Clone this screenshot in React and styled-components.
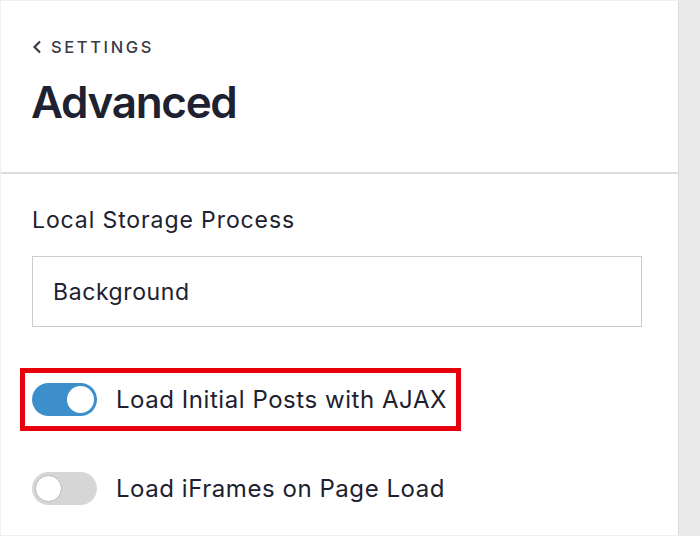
import React from 'react';
import styled, { createGlobalStyle } from 'styled-components';

const GlobalStyle = createGlobalStyle`
  html, body {
    margin: 0;
    padding: 0;
    background: #e9e9e9;
    font-family: Inter, "Noto Sans", sans-serif;
  }
`;

const Page = styled.div`
  display: flex;
  width: 700px;
  height: 536px;
  overflow: hidden;
`;

const Panel = styled.div`
  width: 679px;
  height: 536px;
  background: #fff;
  border: 1px solid #f0f0f0;
  border-right: 1px solid #dcdcdc;
  box-sizing: border-box;
  display: flex;
  flex-direction: column;
`;

const Header = styled.header`
  height: 173px;
  box-sizing: border-box;
  padding: 36px 31px 0;
  border-bottom: 2px solid #dddddd;
`;

const BackLink = styled.a`
  display: flex;
  align-items: center;
  gap: 9px;
  font-size: 16.5px;
  font-weight: 500;
  letter-spacing: 2.6px;
  color: #3a3a48;
  text-decoration: none;
`;

const Title = styled.h1`
  margin: 18px 0 0 -1px;
  font-size: 44px;
  font-weight: 600;
  letter-spacing: -1.3px;
  color: #1d2130;
`;

const Body = styled.section`
  padding: 32px 36px 0 31px;
`;

const FieldLabel = styled.div`
  font-size: 23px;
  letter-spacing: 0.9px;
  color: #1d2130;
  margin-bottom: 22px;
`;

const Select = styled.div`
  height: 71px;
  box-sizing: border-box;
  border: 1.5px solid #cccccc;
  display: flex;
  align-items: center;
  padding: 0 20px;
  font-size: 23px;
  letter-spacing: 0.6px;
  color: #1d2130;
`;

const ToggleRow = styled.div`
  display: flex;
  align-items: center;
  gap: 19px;
  box-sizing: border-box;
  margin-top: 41px;
  ${(p) => p.$highlight && `
    width: 441px;
    height: 63px;
    margin-left: -12px;
    padding: 0 7px;
    border: 5px solid #e8000b;
  `}
`;

const Track = styled.span`
  position: relative;
  width: 65px;
  height: 33px;
  border-radius: 17px;
  background: ${(p) => (p.$on ? '#3d8fcb' : '#d6d6d6')};
  flex-shrink: 0;
`;

const Knob = styled.span`
  position: absolute;
  top: 3px;
  left: ${(p) => (p.$on ? '35px' : '3px')};
  width: 27px;
  height: 27px;
  border-radius: 50%;
  background: #fff;
  box-sizing: border-box;
  border: ${(p) => (p.$on ? 'none' : '1px solid #b9b9b9')};
`;

const ToggleLabel = styled.span`
  font-size: 24px;
  letter-spacing: 0.55px;
  color: #1d2130;
`;

const Toggle = ({ on }) => (
  <Track $on={on}>
    <Knob $on={on} />
  </Track>
);

const App = () => (
  <>
    <GlobalStyle />
    <Page>
      <Panel>
        <Header>
          <BackLink href="#">
            <svg width="10" height="14" viewBox="0 0 10 14">
              <path d="M8 1.5L2.5 7L8 12.5" fill="none" stroke="#3a3a48" strokeWidth="2.2" />
            </svg>
            SETTINGS
          </BackLink>
          <Title>Advanced</Title>
        </Header>
        <Body>
          <FieldLabel>Local Storage Process</FieldLabel>
          <Select>Background</Select>
          <ToggleRow $highlight>
            <Toggle on />
            <ToggleLabel>Load Initial Posts with AJAX</ToggleLabel>
          </ToggleRow>
          <ToggleRow>
            <Toggle />
            <ToggleLabel>Load iFrames on Page Load</ToggleLabel>
          </ToggleRow>
        </Body>
      </Panel>
    </Page>
  </>
);

export default App;
